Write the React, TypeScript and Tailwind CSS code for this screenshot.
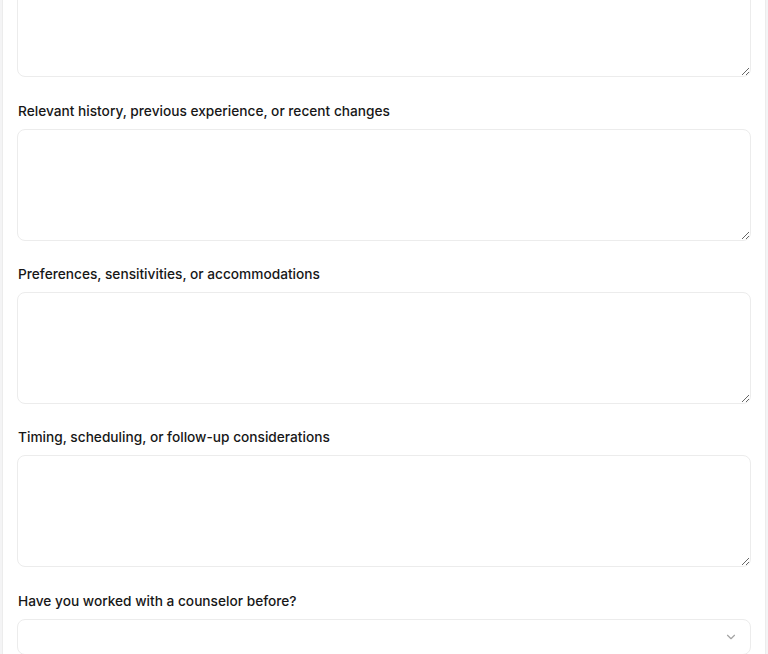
import { ChevronDown } from 'lucide-react';

const fields = [
  'Relevant history, previous experience, or recent changes',
  'Preferences, sensitivities, or accommodations',
  'Timing, scheduling, or follow-up considerations',
];

export default function App() {
  return (
    <div className="h-[654px] overflow-hidden bg-[#f4f4f5] px-[2px]" style={{ fontFamily: 'Inter, "Noto Sans", sans-serif' }}>
      <div className="bg-white border-x border-[#ececec] px-[14px] pb-10">
        <div className="flex flex-col gap-[23px]">
          {/* 上の入力欄（スクロールで一部のみ表示） */}
          <textarea className="-mt-[35px] mb-px h-28 w-full rounded-lg border border-[#ececec] bg-white px-3 py-2 text-sm outline-none resize-y" />

          {fields.map((label) => (
            <div key={label} className="flex flex-col gap-2">
              <label className="text-[13.7px] leading-5 font-medium text-[#171717] pl-[1px]">{label}</label>
              <textarea className="h-28 w-full rounded-lg border border-[#ececec] bg-white px-3 py-2 text-sm outline-none resize-y" />
            </div>
          ))}

          {/* 選択 */}
          <div className="mt-px flex flex-col gap-2">
            <label className="text-[13.7px] leading-5 font-medium text-[#171717] pl-[1px]">Have you worked with a counselor before?</label>
            <button className="flex h-9 w-full items-center justify-end rounded-lg border border-[#ececec] bg-white px-3">
              <ChevronDown size={14} className="text-[#a3a3a3]" />
            </button>
          </div>
        </div>
      </div>
    </div>
  );
}
